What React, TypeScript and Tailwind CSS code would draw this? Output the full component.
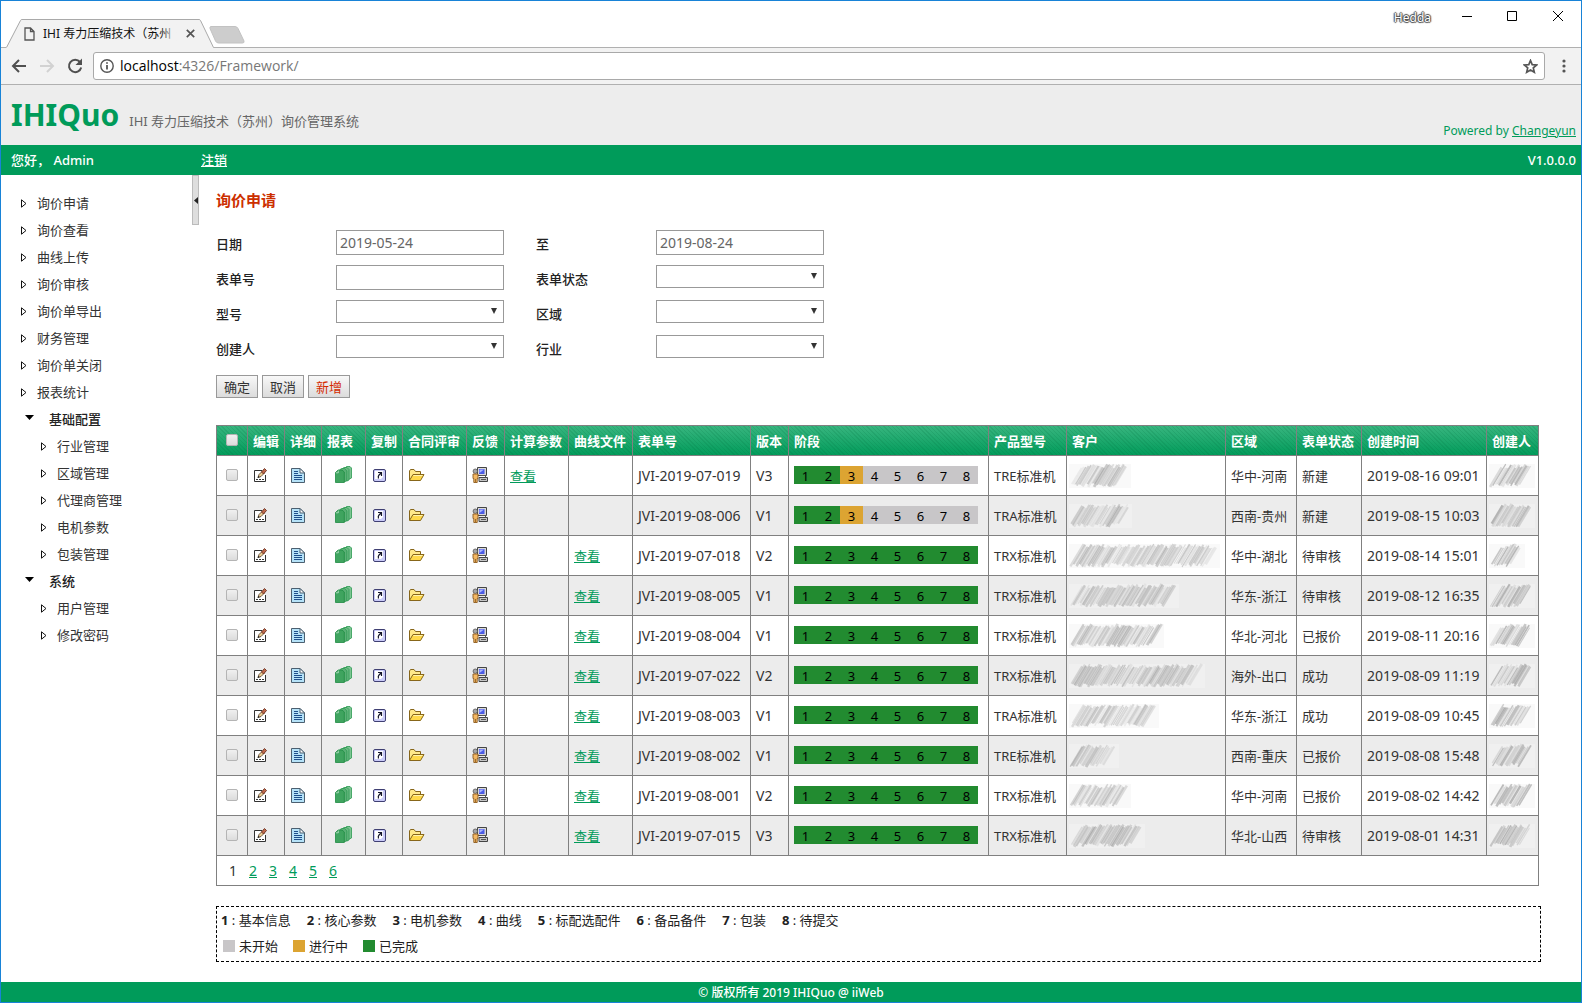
import React from "react";

const FONT = "font-['Noto_Sans','Noto_Sans_CJK_SC',sans-serif]";

/* ---------- browser chrome ---------- */

function WindowTitle() {
  return (
    <div className="flex h-[47px] items-start border-b border-[#b0b0b0] bg-white">
      <div className="relative mt-[18px] -mb-px ml-[5px] flex h-[29px] w-[208px] items-center">
        <svg className="absolute inset-0" width="208" height="29" viewBox="0 0 208 29" aria-hidden="true">
          <path d="M0 28.5 L14.5 0.5 H194 L207.5 28.5 V29 H0Z" fill="#f2f2f2" />
          <path d="M0.5 28.5 L14.5 1.5 Q15 0.5 16 0.5 H193 Q194 0.5 194.500 1.5 L207.500 28.500" fill="none" stroke="#a9a9a9" />
        </svg>
        <div className="relative flex w-full items-center pl-[18px]">
          <svg width="11" height="14" viewBox="0 0 11 14" fill="none" stroke="#555" strokeWidth="1.3" aria-hidden="true">
            <path d="M1 1 H6.500 L10 4.500 V13 H1Z M6.500 1 V4.500 H10" />
          </svg>
          <span className="relative ml-2 w-[134px] text-xs leading-5 whitespace-nowrap text-[#111]">
            IHI 寿力压缩技术（苏州
            <span className="absolute inset-y-0 right-0 w-4 bg-linear-to-r from-transparent to-[#f2f2f2]" />
          </span>
          <button aria-label="关闭标签页" className="ml-[9px]">
            <svg width="9" height="9" viewBox="0 0 9 9" stroke="#555" strokeWidth="1.7">
              <path d="M0.800 0.800 L8.200 8.200 M8.200 0.800 L0.800 8.200" />
            </svg>
          </button>
        </div>
      </div>
      <button aria-label="新标签页" className="mt-[25px] -ml-[5px]">
        <svg width="36" height="18" viewBox="0 0 36 18">
          <path d="M2 0.500 H26 Q28 0.500 29 2.500 L35 15 Q35.500 17 33.500 17 H9.500 Q7.500 17 6.500 15 L1 2.500 Q0.500 0.500 2 0.500Z" fill="#cdcdcd" stroke="#c2c2c2" />
        </svg>
      </button>
      <div className="mt-[5px] mr-[18px] ml-auto flex items-center">
        <span className="mr-[31px] pt-[2px] text-xs leading-5 text-white [text-shadow:1px_0_1px_#444,-1px_0_1px_#444,0_1px_1px_#444,0_-1px_1px_#444]">Hedda</span>
        <button aria-label="最小化" className="mr-[35px] pb-[2px]">
          <svg width="10" height="10" viewBox="0 0 10 10" stroke="#000"><path d="M0 5.500 H10" /></svg>
        </button>
        <button aria-label="最大化" className="mr-9 pb-[2px]">
          <svg width="10" height="10" viewBox="0 0 10 10" fill="none" stroke="#000"><path d="M0.500 0.500 H9.500 V9.500 H0.500Z" /></svg>
        </button>
        <button aria-label="关闭" className="pb-[2px]">
          <svg width="10" height="10" viewBox="0 0 10 10" stroke="#000"><path d="M0 0 L10 10 M10 0 L0 10" /></svg>
        </button>
      </div>
    </div>
  );
}

function Toolbar() {
  return (
    <div className="flex h-[37px] items-center border-b border-[#b0b0b0] bg-[#f2f2f2] pl-[10px]">
      <button aria-label="后退">
        <svg width="16" height="14" viewBox="0 0 16 14" fill="none" stroke="#505050" strokeWidth="2"><path d="M15 7 H2 M8 1 L2 7 L8 13" /></svg>
      </button>
      <button aria-label="前进" className="ml-3">
        <svg width="16" height="14" viewBox="0 0 16 14" fill="none" stroke="#d2d2d2" strokeWidth="2"><path d="M1 7 H14 M8 1 L14 7 L8 13" /></svg>
      </button>
      <button aria-label="刷新" className="ml-3">
        <svg width="16" height="16" viewBox="0 0 16 16" fill="none" stroke="#505050" strokeWidth="2">
          <path d="M13 4 A6.200 6.200 0 1 0 14.200 9.500" />
          <path d="M15 0.500 V7 H8.500Z" fill="#505050" stroke="none" />
        </svg>
      </button>
      <div className="ml-[10px] flex h-7 min-w-0 flex-1 items-center rounded-[3px] border border-[#a9a9a9] bg-white pr-[6px] pl-[6px]">
        <svg width="14" height="14" viewBox="0 0 14 14" fill="none" stroke="#555" strokeWidth="1.400" aria-hidden="true">
          <circle cx="7" cy="7" r="6.200" />
          <path d="M7 6 V10.500 M7 3.200 V4.800" strokeWidth="1.800" />
        </svg>
        <a href="#" className="ml-[6px] flex-1 pb-px font-['Open_Sans'] text-sm leading-5 text-[#777]">
          <span className="text-black">localhost</span>:4326/Framework/
        </a>
        <button aria-label="收藏">
          <svg width="15" height="15" viewBox="0 0 15 15" fill="none" stroke="#555" strokeWidth="1.700">
            <path d="M7.500 1.500 L9.200 5.600 L13.700 6 L10.300 8.900 L11.300 13.200 L7.500 10.900 L3.700 13.200 L4.700 8.900 L1.300 6 L5.800 5.600Z" />
          </svg>
        </button>
      </div>
      <button aria-label="菜单" className="mr-[15px] ml-[17px]">
        <svg width="4" height="14" viewBox="0 0 4 14" fill="#555"><circle cx="2" cy="2" r="1.600" /><circle cx="2" cy="7" r="1.600" /><circle cx="2" cy="12" r="1.600" /></svg>
      </button>
    </div>
  );
}

/* ---------- sidebar ---------- */

type Item = { label: string; kind: "top" | "group" | "sub" };
const MENU: Item[] = [
  ...["询价申请", "询价查看", "曲线上传", "询价审核", "询价单导出", "财务管理", "询价单关闭", "报表统计"].map((label) => ({ label, kind: "top" as const })),
  { label: "基础配置", kind: "group" },
  ...["行业管理", "区域管理", "代理商管理", "电机参数", "包装管理"].map((label) => ({ label, kind: "sub" as const })),
  { label: "系统", kind: "group" },
  ...["用户管理", "修改密码"].map((label) => ({ label, kind: "sub" as const })),
];

function Sidebar() {
  return (
    <nav className="w-[191px] shrink-0 pt-[14px]">
      <ul>
        {MENU.map((m) => (
          <li key={m.label} className={m.kind === "sub" ? "pl-10" : m.kind === "group" ? "pl-6" : "pl-5"}>
            {m.kind === "group" ? (
              <button className="flex h-[27px] items-center gap-[15px] font-medium text-[#222]">
                <svg width="9" height="5" viewBox="0 0 9 5" className="mb-[2px]" aria-hidden="true"><path d="M0 0 H9 L4.500 5Z" fill="#000" /></svg>
                {m.label}
              </button>
            ) : (
              <a href="#" className="flex h-[27px] items-center gap-[10px]">
                <svg width="6" height="9" viewBox="0 0 6 9" className="mt-[2px]" fill="#fff" stroke="#111" aria-hidden="true"><path d="M0.500 0.800 L5 4.500 L0.500 8.200Z" /></svg>
                {m.label}
              </a>
            )}
          </li>
        ))}
      </ul>
    </nav>
  );
}

/* ---------- filter form ---------- */

function TextField({ id, label, value }: { id: string; label: string; value?: string }) {
  return (
    <div className="flex h-[35px] items-start">
      <label htmlFor={id} className="w-[120px] pt-1 leading-5 font-medium text-[#222]">{label}</label>
      <input id={id} type="text" defaultValue={value} className="h-[25px] w-[168px] border border-[#999] bg-white px-[3px] text-sm text-[#666]" />
    </div>
  );
}

function SelectField({ id, label }: { id: string; label: string }) {
  return (
    <div className="flex h-[35px] items-start">
      <label htmlFor={id} className="w-[120px] pt-1 leading-5 font-medium text-[#222]">{label}</label>
      <div className="relative">
        <select id={id} className="block h-[23px] w-[168px] appearance-none border border-[#999] bg-white">
          <option></option>
        </select>
        <svg className="pointer-events-none absolute top-2 right-[7px]" width="6" height="6" viewBox="0 0 6 6" aria-hidden="true"><path d="M0 0 H6 L3 6Z" fill="#333" /></svg>
      </div>
    </div>
  );
}

function FormButton({ children, red }: { children: string; red?: boolean }) {
  return (
    <button className={`h-[23px] w-[42px] border border-[#999] bg-linear-to-b from-[#f8f8f8] to-[#dcdcdc] leading-5 ${red ? "text-[#d42a00]" : "text-[#333]"}`}>
      {children}
    </button>
  );
}

/* ---------- row icons ---------- */

const EditIcon = () => (
  <svg width="16" height="16" viewBox="0 0 16 16" aria-hidden="true">
    <path d="M9 3.500 H1.500 V14.500 H12.500 V8" fill="#fff" stroke="#333" />
    <path d="M3 12.500 H11" stroke="#333" strokeDasharray="2 1" />
    <path d="M5 10.500 L6 7.500 L9.500 4 L11.500 6 L8 9.500Z" fill="#f0cf94" stroke="#4a3a28" strokeWidth="0.800" />
    <path d="M8.500 5 L11.500 1.500 L13.500 3.500 L10.500 7Z" fill="#c06a4c" stroke="#6b3020" strokeWidth="0.900" />
    <path d="M4.500 11 L5.300 8.800 L6.600 10.200Z" fill="#222" />
  </svg>
);
const DocIcon = () => (
  <svg width="16" height="16" viewBox="0 0 16 16" aria-hidden="true">
    <path d="M1.500 1.500 H10 L14.500 6 V15.500 H1.500Z" fill="#b5e2f8" stroke="#4b5f70" />
    <path d="M10 1.500 V6 H14.500Z" fill="#fff" stroke="#4b5f70" />
    <path d="M4 4.500 H8 M4 6.500 H8 M4 8.500 H12 M4 10.500 H12 M4 12.500 H12" stroke="#1d4f8c" />
  </svg>
);
const ReportIcon = () => (
  <svg width="17" height="17" viewBox="0 0 17 17" stroke="#2c9a52" strokeWidth="0.800" aria-hidden="true">
    <path d="M9.500 2.500 L11.500 0.500 H15 L16.500 2 V12 L13.500 13.500Z" fill="#7cc492" />
    <path d="M7 3 L9 1.500 H12 L14 3.500 V14 L12 15Z" fill="#68b880" />
    <path d="M4.500 4 L6.500 2.500 H9.500 L11.800 5 V15 L9 15.800Z" fill="#5bb076" />
    <path d="M0.500 6.500 L3 4 H7 L9.300 6 V16.500 H0.500Z" fill="#3fa45f" stroke="#1f8a43" />
    <path d="M1 6.800 H3.300 V4.500" fill="none" stroke="#bfe5ca" />
  </svg>
);
const CopyIcon = () => (
  <svg width="16" height="16" viewBox="0 0 16 16" aria-hidden="true">
    <rect x="2.500" y="2.500" width="12" height="12" rx="1.500" fill="#c9caf8" stroke="#3f3f72" />
    <path d="M4 4 H12 V10 L10 12 H4Z" fill="#fff" />
    <path d="M7 5.500 H10.500 V9 M10.500 5.500 L8 8 Q6.800 9.200 7.500 11.500" fill="none" stroke="#14142c" strokeWidth="1.200" />
  </svg>
);
const FolderIcon = () => (
  <svg width="17" height="16" viewBox="0 0 17 16" stroke="#87661a" aria-hidden="true">
    <path d="M1.500 13 V4 L2.500 2.500 H6 L7.500 4.500 H12.500 V7" fill="#ffe98a" />
    <path d="M1.500 13.500 L5 7.500 H16 L12.500 13.500Z" fill="#ffd94a" />
    <path d="M5.500 8.500 H14.500" stroke="#fff3b0" />
  </svg>
);
const FeedbackIcon = () => (
  <svg width="16" height="16" viewBox="0 0 16 16" aria-hidden="true">
    <path d="M5.500 0.500 H14.500 V8.500 H5.500Z" fill="#d8d8d8" stroke="#444" />
    <path d="M7 2 H12.500 V7 H7Z" fill="#4b5be6" />
    <path d="M7.500 2.500 H12 L7.500 6Z" fill="#a9b4ff" />
    <path d="M7 10.500 H15.500 V14.500 H7Z" fill="#c4c4c4" stroke="#444" />
    <path d="M8.500 8.500 H13.500 V10.500 M9 12.500 H14" fill="none" stroke="#555" />
    <circle cx="3.300" cy="4.200" r="2.200" fill="#a8a8a8" stroke="#555" strokeWidth="0.800" />
    <path d="M1 7 H6 V11.500 H5.200 V15.500 H1.800 V11.500 H1Z" fill="#f3b864" stroke="#8c5a1e" strokeWidth="0.900" />
    <path d="M3.500 12 V15" stroke="#8c5a1e" strokeWidth="0.800" />
  </svg>
);

/* Obscured name: soft slanted pen strokes over a pale band. */
function Smudge({ width, seed, strong }: { width: number; seed: number; strong?: boolean }) {
  let s = seed * 7919 + 13;
  const rnd = () => {
    s = (s * 1103515245 + 12345) % 2147483648;
    return s / 2147483648;
  };
  const strokes = [];
  for (let x = 1; x < width - 12; x += 2) {
    const gray = Math.round(140 + rnd() * 80);
    const top = 1 + rnd() * 4;
    const bottom = 20 + rnd() * 4;
    strokes.push(
      <path
        key={x}
        d={`M${x + (24 - bottom) * 0.6} ${bottom} L${x + (24 - top) * 0.6} ${top}`}
        stroke={`rgb(${gray},${gray},${gray})`}
        strokeWidth={1 + rnd() * 2}
        opacity={strong ? 0.6 : 0.45}
      />,
    );
  }
  return (
    <svg width={width + 4} height="26" viewBox={`0 0 ${width + 4} 26`} className="block" role="img" aria-label="已隐藏">
      <rect x="0" y="1" width={width + 3} height="24" fill="#f3f3f3" opacity="0.500" />
      <g className="blur-[0.700px]">{strokes}</g>
    </svg>
  );
}

/* ---------- data table ---------- */

type Row = { calc?: boolean; curve?: boolean; no: string; ver: string; stage: number; model: string; cust: number; area: string; state: string; time: string; who: number };
const ROWS: Row[] = [
  { calc: true, no: "JVI-2019-07-019", ver: "V3", stage: 3, model: "TRE标准机", cust: 59, area: "华中-河南", state: "新建", time: "2019-08-16 09:01", who: 43 },
  { no: "JVI-2019-08-006", ver: "V1", stage: 3, model: "TRA标准机", cust: 60, area: "西南-贵州", state: "新建", time: "2019-08-15 10:03", who: 43 },
  { curve: true, no: "JVI-2019-07-018", ver: "V2", stage: 9, model: "TRX标准机", cust: 148, area: "华中-湖北", state: "待审核", time: "2019-08-14 15:01", who: 33 },
  { curve: true, no: "JVI-2019-08-005", ver: "V1", stage: 9, model: "TRX标准机", cust: 107, area: "华东-浙江", state: "待审核", time: "2019-08-12 16:35", who: 43 },
  { curve: true, no: "JVI-2019-08-004", ver: "V1", stage: 9, model: "TRX标准机", cust: 92, area: "华北-河北", state: "已报价", time: "2019-08-11 20:16", who: 43 },
  { curve: true, no: "JVI-2019-07-022", ver: "V2", stage: 9, model: "TRX标准机", cust: 133, area: "海外-出口", state: "成功", time: "2019-08-09 11:19", who: 43 },
  { curve: true, no: "JVI-2019-08-003", ver: "V1", stage: 9, model: "TRA标准机", cust: 87, area: "华东-浙江", state: "成功", time: "2019-08-09 10:45", who: 43 },
  { curve: true, no: "JVI-2019-08-002", ver: "V1", stage: 9, model: "TRE标准机", cust: 47, area: "西南-重庆", state: "已报价", time: "2019-08-08 15:48", who: 43 },
  { curve: true, no: "JVI-2019-08-001", ver: "V2", stage: 9, model: "TRX标准机", cust: 59, area: "华中-河南", state: "已报价", time: "2019-08-02 14:42", who: 43 },
  { curve: true, no: "JVI-2019-07-015", ver: "V3", stage: 9, model: "TRX标准机", cust: 73, area: "华北-山西", state: "待审核", time: "2019-08-01 14:31", who: 43 },
];

const HEADS = ["编辑", "详细", "报表", "复制", "合同评审", "反馈", "计算参数", "曲线文件", "表单号", "版本", "阶段", "产品型号", "客户", "区域", "表单状态", "创建时间", "创建人"];

const Check = ({ label }: { label: string }) => (
  <input type="checkbox" aria-label={label} className="mx-auto block size-3 appearance-none rounded-[2px] border border-[#b4b4b4] bg-linear-to-b from-[#f0f0f0] to-[#dcdcdc]" />
);

const LINK = "text-[#009b5a] underline";
const CELL = "border border-[#808080] px-[5px]";
const ICON_CELL = "border border-[#808080] px-[5px] pb-[2px]";

function StageBar({ current }: { current: number }) {
  return (
    <div className="flex w-[184px]">
      {[1, 2, 3, 4, 5, 6, 7, 8].map((n) => (
        <span key={n} className={`h-[18px] w-[23px] pt-px text-center leading-[18px] text-black ${n < current ? "bg-[#228b30]" : n === current ? "bg-[#dca432]" : "bg-[#c8c6c8]"}`}>
          {n}
        </span>
      ))}
    </div>
  );
}

function DataTable() {
  return (
    <table className="w-full min-w-[1240px] table-fixed border-collapse border border-[#808080] whitespace-nowrap">
      <colgroup>
        <col className="w-[31px]" />
        <col className="w-[37px]" />
        <col className="w-[37px]" />
        <col className="w-11" />
        <col className="w-[37px]" />
        <col className="w-16" />
        <col className="w-[38px]" />
        <col className="w-16" />
        <col className="w-16" />
        <col className="w-[118px]" />
        <col className="w-[38px]" />
        <col className="w-[200px]" />
        <col className="w-[78px]" />
        <col />
        <col className="w-[71px]" />
        <col className="w-[65px]" />
        <col className="w-[125px]" />
        <col className="w-[52px]" />
      </colgroup>
      <thead>
        <tr className="h-[30px] bg-[repeating-linear-gradient(45deg,rgba(0,110,60,0.16)_0px,rgba(0,110,60,0.16)_1px,transparent_1px,transparent_3px),linear-gradient(#38b57f,#009b5a)] text-left text-white">
          <th className={ICON_CELL}><Check label="全选" /></th>
          {HEADS.map((h) => (
            <th key={h} className={`${CELL} font-bold`}>{h}</th>
          ))}
        </tr>
      </thead>
      <tbody>
        {ROWS.map((r, i) => (
          <tr key={r.no} className={`h-10 ${i % 2 ? "bg-[#ececec]" : "bg-white"}`}>
            <td className={ICON_CELL}><Check label={`选择 ${r.no}`} /></td>
            <td className={ICON_CELL}><button aria-label="编辑" className="block"><EditIcon /></button></td>
            <td className={ICON_CELL}><button aria-label="详细" className="block"><DocIcon /></button></td>
            <td className={ICON_CELL}><button aria-label="报表" className="mx-auto block"><ReportIcon /></button></td>
            <td className={ICON_CELL}><button aria-label="复制" className="block"><CopyIcon /></button></td>
            <td className={ICON_CELL}><button aria-label="合同评审" className="block"><FolderIcon /></button></td>
            <td className={ICON_CELL}><button aria-label="反馈" className="block"><FeedbackIcon /></button></td>
            <td className={CELL}>{r.calc && <a href="#" className={LINK}>查看</a>}</td>
            <td className={CELL}>{r.curve && <a href="#" className={LINK}>查看</a>}</td>
            <td className={`${CELL} text-sm`}>{r.no}</td>
            <td className={`${CELL} text-sm`}>{r.ver}</td>
            <td className={ICON_CELL}><StageBar current={r.stage} /></td>
            <td className={CELL}>{r.model}</td>
            <td className="border border-[#808080] px-[2px]"><Smudge width={r.cust} seed={i + 1} /></td>
            <td className={CELL}>{r.area}</td>
            <td className={CELL}>{r.state}</td>
            <td className={`${CELL} text-sm`}>{r.time}</td>
            <td className="border border-[#808080] px-[2px]"><Smudge width={r.who} seed={i + 31} strong /></td>
          </tr>
        ))}
        <tr className="h-[30px]">
          <td colSpan={18} className="border border-[#808080] px-[6px]">
            <div className="flex text-sm">
              <span className="w-5 text-center">1</span>
              {[2, 3, 4, 5, 6].map((n) => (
                <a key={n} href="#" className={`w-5 text-center ${LINK}`}>{n}</a>
              ))}
            </div>
          </td>
        </tr>
      </tbody>
    </table>
  );
}

const STAGES = ["基本信息", "核心参数", "电机参数", "曲线", "标配选配件", "备品备件", "包装", "待提交"];

function Legend() {
  return (
    <div className="mt-5 -mr-[2px] border border-dashed border-black px-1 pb-[2px] text-[#222]">
      <div className="flex h-[26px] items-center gap-4 whitespace-nowrap">
        {STAGES.map((s, i) => (
          <span key={s}><b>{i + 1}</b> : {s}</span>
        ))}
      </div>
      <div className="flex h-[26px] items-center gap-[15px] px-[2px] whitespace-nowrap">
        <span className="flex items-center gap-1"><i className="size-3 bg-[#c8c6c8]" />未开始</span>
        <span className="flex items-center gap-1"><i className="size-3 bg-[#dca432]" />进行中</span>
        <span className="flex items-center gap-1"><i className="size-3 bg-[#228b30]" />已完成</span>
      </div>
    </div>
  );
}

export default function App() {
  return (
    <div className={`flex min-h-screen flex-col border border-[#1883d7] bg-white text-[13px] leading-5 text-[#333] ${FONT}`}>
      <WindowTitle />
      <Toolbar />
      <header className="flex h-[60px] items-end justify-between bg-[#ededed] pr-[5px] pl-[10px]">
        <div className="flex items-baseline gap-[10px] pb-[10px]">
          <h1 className="text-[30px] leading-10 font-bold text-[#009b5a]">IHIQuo</h1>
          <span className="text-[#666]">IHI 寿力压缩技术（苏州）询价管理系统</span>
        </div>
        <p className="pb-1 text-xs leading-5 text-[#009b5a]">Powered by <a href="#" className="underline">Changeyun</a></p>
      </header>
      <div className="flex h-[30px] items-center bg-[#009b5a] pr-[5px] pl-[10px] font-medium text-white">
        <span className="w-[190px]">您好， Admin</span>
        <a href="#" className="underline">注销</a>
        <span className="ml-auto">V1.0.0.0</span>
      </div>
      <div className="flex flex-1">
        <Sidebar />
        <button aria-label="收起菜单" className="flex h-[50px] w-[7px] items-center justify-center border border-[#bbb] bg-[#dedede]">
          <svg width="4" height="7" viewBox="0 0 4 7"><path d="M4 0 V7 L0 3.500Z" fill="#222" /></svg>
        </button>
        <main className="min-w-0 flex-1 pr-[42px] pb-5 pl-[17px]">
          <h2 className="pt-[15px] text-[15px] leading-5 font-bold text-[#cc2f00]">询价申请</h2>
          <form className="mt-5 grid w-max grid-cols-2 gap-x-8">
            <TextField id="from" label="日期" value="2019-05-24" />
            <TextField id="to" label="至" value="2019-08-24" />
            <TextField id="no" label="表单号" />
            <SelectField id="state" label="表单状态" />
            <SelectField id="model" label="型号" />
            <SelectField id="area" label="区域" />
            <SelectField id="creator" label="创建人" />
            <SelectField id="trade" label="行业" />
          </form>
          <div className="mt-[5px] mb-[27px] flex gap-1">
            <FormButton>确定</FormButton>
            <FormButton>取消</FormButton>
            <FormButton red>新增</FormButton>
          </div>
          <DataTable />
          <Legend />
        </main>
      </div>
      <footer className="flex h-5 items-center justify-center bg-[#009b5a] pt-[2px] text-xs font-medium text-white">© 版权所有 2019 IHIQuo @ iiWeb</footer>
    </div>
  );
}
